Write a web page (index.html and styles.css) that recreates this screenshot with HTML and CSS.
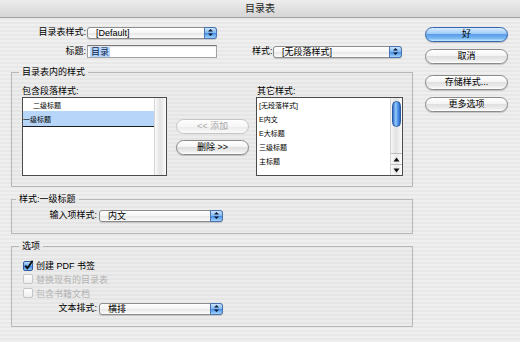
FILE: index.html
```html
<!DOCTYPE html>
<html lang="zh-CN">
<head>
  <meta charset="UTF-8">
  <title>目录表</title>
  <link rel="stylesheet" href="styles.css">
</head>
<body>
  <div class="titlebar">目录表</div>

  <div class="dialog">
    <div class="main">
      <div class="top-form">
        <div class="row">
          <span class="label">目录表样式:</span>
          <div class="popup popup-toc">
            <span class="popup-text">[Default]</span>
            <span class="popup-arrows">
              <svg width="7" height="9" viewBox="0 0 7 9"><path d="M1 3.6 L3.5 1 L6 3.6 Z M1 5.4 L3.5 8 L6 5.4 Z" fill="#0e1b33"/></svg>
            </span>
          </div>
        </div>
        <div class="row">
          <span class="label">标题:</span>
          <div class="textfield"><span class="selected-text">目录</span></div>
          <span class="label-inline">样式:</span>
          <div class="popup popup-title">
            <span class="popup-text">[无段落样式]</span>
            <span class="popup-arrows">
              <svg width="7" height="9" viewBox="0 0 7 9"><path d="M1 3.6 L3.5 1 L6 3.6 Z M1 5.4 L3.5 8 L6 5.4 Z" fill="#0e1b33"/></svg>
            </span>
          </div>
        </div>
      </div>

      <fieldset class="group group-styles">
        <legend>目录表内的样式</legend>
        <div class="lists">
          <div class="list-col">
            <div class="list-label">包含段落样式:</div>
            <div class="listbox list-left">
              <div class="list-items">
                <div class="list-item child">二级标题</div>
                <div class="list-item selected">一级标题</div>
              </div>
              <div class="scroll-empty"></div>
            </div>
          </div>

          <div class="move-buttons">
            <div class="btn btn-disabled">&lt;&lt; 添加</div>
            <div class="btn">删除 &gt;&gt;</div>
          </div>

          <div class="list-col">
            <div class="list-label right-label">其它样式:</div>
            <div class="listbox list-right">
              <div class="list-items">
                <div class="list-item">[无段落样式]</div>
                <div class="list-item">E内文</div>
                <div class="list-item">E大标题</div>
                <div class="list-item">三级标题</div>
                <div class="list-item">主标题</div>
              </div>
              <div class="scrollbar">
                <div class="thumb"></div>
                <div class="track"></div>
                <div class="arrow">
                  <svg width="7" height="5" viewBox="0 0 7 5"><path d="M0.5 4.5 L3.5 0.5 L6.5 4.5 Z" fill="#111"/></svg>
                </div>
                <div class="arrow">
                  <svg width="7" height="5" viewBox="0 0 7 5"><path d="M0.5 0.5 L3.5 4.5 L6.5 0.5 Z" fill="#111"/></svg>
                </div>
              </div>
            </div>
          </div>
        </div>
      </fieldset>

      <fieldset class="group group-entry">
        <legend>样式:一级标题</legend>
        <div class="row field-row">
          <span class="label label-wide">输入项样式:</span>
          <div class="popup popup-small">
            <span class="popup-text">内文</span>
            <span class="popup-arrows">
              <svg width="7" height="9" viewBox="0 0 7 9"><path d="M1 3.6 L3.5 1 L6 3.6 Z M1 5.4 L3.5 8 L6 5.4 Z" fill="#0e1b33"/></svg>
            </span>
          </div>
        </div>
      </fieldset>

      <fieldset class="group group-options">
        <legend>选项</legend>
        <div class="check-row">
          <svg class="checkbox" width="11" height="11" viewBox="0 0 11 11">
            <defs>
              <linearGradient id="cbBlue" x1="0" y1="0" x2="0" y2="1">
                <stop offset="0" stop-color="#c9e3fb"/>
                <stop offset="0.5" stop-color="#6aa9ec"/>
                <stop offset="0.55" stop-color="#3f88e0"/>
                <stop offset="1" stop-color="#9fd2fb"/>
              </linearGradient>
            </defs>
            <rect x="0.5" y="1.5" width="9" height="9" rx="1.5" fill="url(#cbBlue)" stroke="#2f5d9e"/>
            <path d="M2.2 5.6 L4.4 8.3 L9.6 0.8" fill="none" stroke="#0d0d0d" stroke-width="1.8"/>
          </svg>
          <span>创建 PDF 书签</span>
        </div>
        <div class="check-row disabled">
          <span class="checkbox checkbox-off"></span>
          <span>替换现有的目录表</span>
        </div>
        <div class="check-row disabled">
          <span class="checkbox checkbox-off"></span>
          <span>包含书籍文档</span>
        </div>
        <div class="row field-row layout-row">
          <span class="label label-wide">文本排式:</span>
          <div class="popup popup-small">
            <span class="popup-text">横排</span>
            <span class="popup-arrows">
              <svg width="7" height="9" viewBox="0 0 7 9"><path d="M1 3.6 L3.5 1 L6 3.6 Z M1 5.4 L3.5 8 L6 5.4 Z" fill="#0e1b33"/></svg>
            </span>
          </div>
        </div>
      </fieldset>
    </div>

    <div class="side">
      <div class="btn btn-default">好</div>
      <div class="btn">取消</div>
      <div class="btn btn-spaced">存储样式...</div>
      <div class="btn">更多选项</div>
    </div>
  </div>
</body>
</html>
```

FILE: styles.css
```css
* {
  box-sizing: border-box;
}
html, body {
  margin: 0;
}
body {
  width: 520px;
  height: 342px;
  overflow: hidden;
  font-family: "Liberation Sans", "Noto Sans CJK SC", sans-serif;
  font-size: 9px;
  color: #000;
  background: repeating-linear-gradient(to bottom, #efefef 0, #efefef 2px, #e8e8e8 2px, #e8e8e8 4px);
}
.titlebar {
  height: 18px;
  line-height: 17px;
  text-align: center;
  font-size: 10px;
  color: #1e1e1e;
  background: linear-gradient(#ededed, #d5d5d5);
  border-bottom: 1px solid #a2a2a2;
}
.dialog {
  display: flex;
  gap: 12px;
  padding-left: 11px;
}
.main {
  width: 402px;
}
.side {
  width: 83px;
  padding-top: 9px;
  display: flex;
  flex-direction: column;
  gap: 7px;
}
.side .btn-spaced {
  margin-top: 4px;
}

/* ligne de formulaire */
.top-form {
  padding-top: 8px;
  display: flex;
  flex-direction: column;
  gap: 6px;
}
.row {
  display: flex;
  align-items: center;
  height: 13px;
}
.label {
  width: 76px;
  padding-right: 1px;
  text-align: right;
  line-height: 11px;
  white-space: nowrap;
}
.label-wide {
  width: 77px;
  padding-right: 2px;
}
.label-inline {
  margin-left: 35px;
  width: 21px;
  line-height: 11px;
  white-space: nowrap;
}

/* popup aqua */
.popup {
  display: flex;
  height: 12px;
  border: 1px solid #8d8d8d;
  border-radius: 3px;
  background: linear-gradient(#ffffff, #f4f4f4 50%, #e8e8e8 55%, #fdfdfd);
  box-shadow: 0 1px 1px rgba(0, 0, 0, 0.15);
}
.popup-toc {
  width: 130px;
}
.popup-title {
  width: 129px;
}
.popup-small {
  width: 124px;
}
.popup-text {
  flex: 1;
  padding-left: 8px;
  line-height: 10px;
  white-space: nowrap;
  overflow: hidden;
}
.popup-arrows {
  width: 13px;
  margin: -1px -1px -1px 0;
  border: 1px solid #4a74b0;
  border-radius: 0 3px 3px 0;
  background: linear-gradient(#cbe4fc, #7db6f0 50%, #4b91e5 55%, #a3d4fc);
  display: flex;
  align-items: center;
  justify-content: center;
}
.popup-arrows svg {
  display: block;
}

.textfield {
  width: 130px;
  height: 13px;
  background: #fff;
  border: 1px solid #a3a3a3;
  border-top-color: #767676;
  box-shadow: inset 0 1px 1px rgba(0, 0, 0, 0.12);
  padding-left: 2px;
  display: flex;
  align-items: center;
}
.selected-text {
  background: #b5d5ff;
  color: #0c1c44;
  line-height: 10px;
  padding: 0 1px;
}

/* groupes */
.group {
  margin: 8px 0 0;
  padding: 0 9px 10px 10px;
  border: 1px solid #b7b7b7;
  min-width: 0;
  background: rgba(0, 0, 0, 0.012);
}
.group legend {
  padding: 0 3px;
  margin-left: -3px;
  line-height: 12px;
}
.group-entry {
  margin-top: 6px;
  padding-bottom: 11px;
}
.group-entry legend {
  margin-left: -6px;
}
.group-options {
  margin-top: 6px;
  padding-bottom: 11px;
}
.field-row {
  margin-top: 4px;
}

/* listes */
.lists {
  display: flex;
  padding-top: 8px;
}
.list-col {
  display: flex;
  flex-direction: column;
}
.list-label {
  line-height: 11px;
}
.right-label {
  padding-left: 1px;
}
.listbox {
  display: flex;
  height: 79px;
  border: 1px solid #4b4b4b;
  background: #fff;
  font-size: 7px;
}
.list-left {
  width: 145px;
}
.list-right {
  width: 147px;
}
.list-items {
  flex: 1;
  padding-top: 1px;
}
.list-item {
  height: 14px;
  line-height: 14px;
  padding-left: 2px;
  white-space: nowrap;
}
.list-left .list-item.child {
  height: 12px;
  padding-left: 10px;
  line-height: 13px;
}
.list-left .list-item.selected {
  height: 16px;
  padding-left: 0;
  line-height: 17px;
  background: #b7d5f9;
  border-bottom: 1px solid #1c1c1c;
}
.scroll-empty {
  width: 12px;
  border-left: 1px solid #d6d6d6;
  background: linear-gradient(to right, #fbfbfb, #e3e3e3 45%, #efefef 75%, #fdfdfd);
}
.scrollbar {
  width: 12px;
  display: flex;
  flex-direction: column;
  border-left: 1px solid #d3d3d3;
  background: linear-gradient(to right, #f6f6f6, #e2e2e2 45%, #eeeeee 75%, #fbfbfb);
}
.thumb {
  height: 26px;
  margin: 3px 1px 0;
  border: 1px solid #2a5ca6;
  border-radius: 5px;
  background: linear-gradient(to right, #3572cf, #98ccfa 40%, #4c92e8 70%, #2b68c6);
}
.track {
  flex: 1;
}
.arrow {
  height: 11px;
  border-top: 1px solid #bdbdbd;
  display: flex;
  align-items: center;
  justify-content: center;
  background: linear-gradient(to right, #fafafa, #e8e8e8 50%, #fdfdfd);
}
.arrow svg {
  display: block;
}
.move-buttons {
  width: 73px;
  margin: 33px 7px 0 9px;
  display: flex;
  flex-direction: column;
  gap: 6px;
}

/* boutons aqua */
.btn {
  height: 15px;
  border: 1px solid #8a8a8a;
  border-radius: 8px;
  background: linear-gradient(#ffffff, #f4f4f4 45%, #e0e0e0 50%, #ececec 80%, #ffffff);
  box-shadow: 0 1px 1px rgba(0, 0, 0, 0.18);
  text-align: center;
  line-height: 13px;
  white-space: nowrap;
}
.btn-default {
  border-color: #3465ad;
  background: linear-gradient(#d9edff, #9dcaf6 45%, #5c9de9 50%, #79b9f5 80%, #c9ecff);
}
.btn-disabled {
  border-color: #c5c5c5;
  color: #a8a8a8;
  box-shadow: none;
  background: linear-gradient(#ffffff, #f6f6f6 50%, #ececec 55%, #fafafa);
}

/* cases */
.check-row {
  display: flex;
  align-items: center;
  gap: 2px;
  height: 14px;
  padding-left: 1px;
}
.group-options .check-row:first-of-type {
  margin-top: 6px;
}
.check-row.disabled {
  color: #b3b3b3;
}
.checkbox {
  display: block;
  width: 11px;
  height: 11px;
  flex: none;
}
.checkbox-off {
  width: 10px;
  height: 10px;
  margin-right: 1px;
  border: 1px solid #c6c6c6;
  border-radius: 2px;
  background: linear-gradient(#ffffff, #eeeeee);
}
.layout-row {
  margin-top: 2px;
}
```
